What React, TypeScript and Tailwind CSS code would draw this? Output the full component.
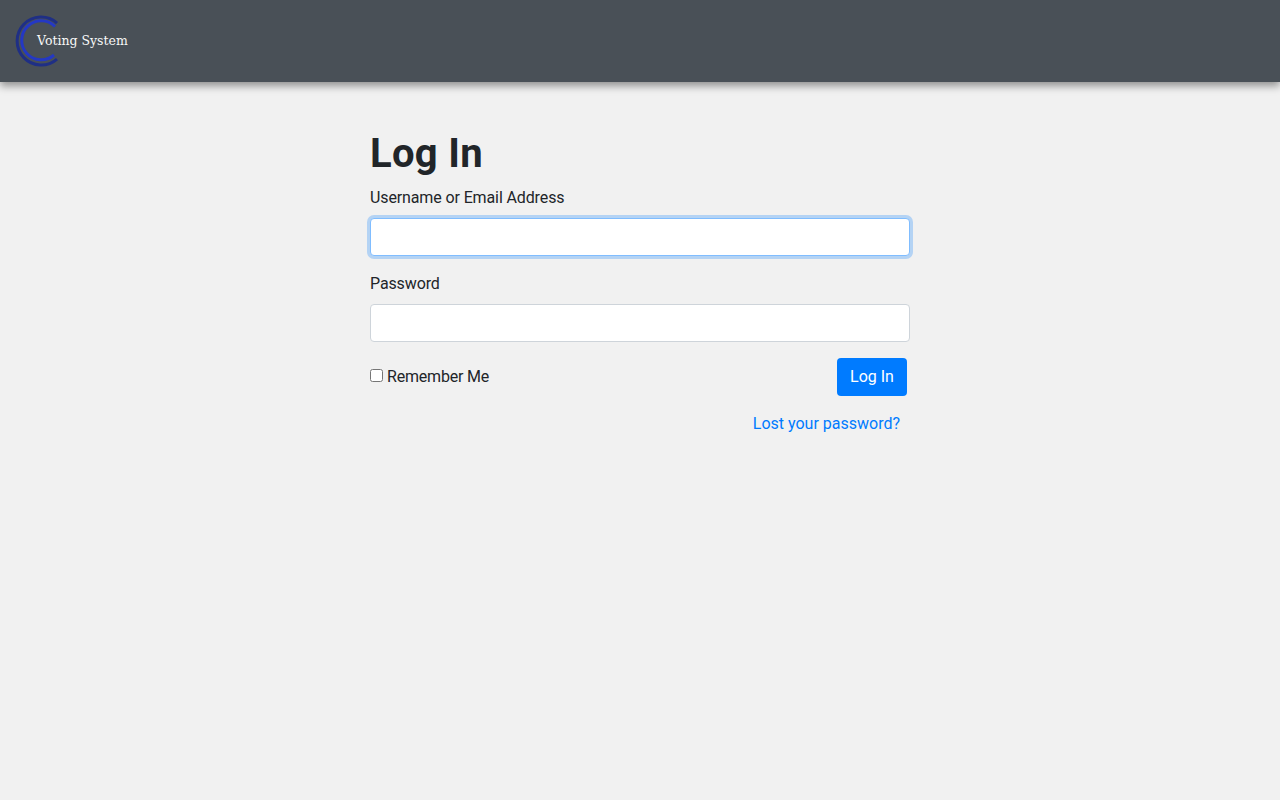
export default function App() {
  return (
    <div className="min-h-[800px] bg-[#f1f1f1] text-[#212529] text-base font-['Roboto',sans-serif]">
      <header className="h-[82px] bg-[#495057] shadow-[0_4px_8px_rgba(0,0,0,0.4)] flex items-center pl-[15px]">
        <div className="flex items-center">
          <svg width="45" height="52" viewBox="15 15 45 52" fill="none" className="shrink-0">
            <path d="M57 23 A24 24 0 1 0 57 59" stroke="#1f2f85" strokeWidth="3" />
            <path d="M55 26.5 A19.5 19.5 0 1 0 54 55" stroke="#2438c4" strokeWidth="3" />
          </svg>
          <span className="ml-[-23px] mt-px text-[12.5px] text-[#f8f8f8] font-['DejaVu_Serif',serif]">Voting System</span>
        </div>
      </header>
      <main className="w-[540px] mx-auto pt-[48px]">
        <h1 className="text-[40px] leading-[48px] font-bold mb-2 tracking-[0.3px]">Log In</h1>
        <form>
          <div className="mb-4">
            <label htmlFor="user" className="block leading-6 mb-2 tracking-[-0.12px]">Username or Email Address</label>
            <input id="user" type="text" className="block w-full h-[38px] bg-white rounded border border-[#80bdff] shadow-[0_0_0_3px_rgba(0,123,255,0.25)] outline-none" />
          </div>
          <div className="mb-4">
            <label htmlFor="pass" className="block leading-6 mb-2 tracking-[-0.12px]">Password</label>
            <input id="pass" type="password" className="block w-full h-[38px] bg-white rounded border border-[#ced4da] outline-none" />
          </div>
          <div className="flex items-center justify-between pr-[3px]">
            <label className="flex items-center leading-6 tracking-[-0.2px]">
              <input type="checkbox" className="w-[13px] h-[13px] mr-1 -mt-[3px]" />
              Remember Me
            </label>
            <button type="button" className="h-[38px] w-[70px] bg-[#007bff] text-white rounded">Log In</button>
          </div>
          <div className="flex justify-end pr-[10px] mt-4">
            <a href="#" className="leading-6 text-[#007bff]">Lost your password?</a>
          </div>
        </form>
      </main>
    </div>
  );
}
